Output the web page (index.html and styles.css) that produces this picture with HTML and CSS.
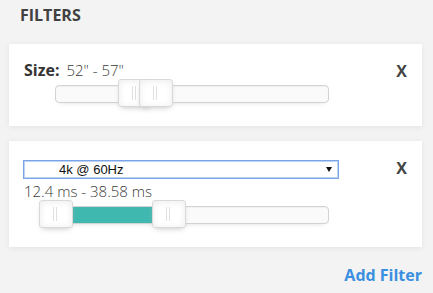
FILE: index.html
```html
<!DOCTYPE html>
<html lang="en">
<head>
  <meta charset="UTF-8">
  <title>Filters</title>
  <meta name="viewport" content="width=device-width, initial-scale=1.0">
  <link rel="stylesheet" href="styles.css">
</head>
<body>
  <div class="filters">
    <h2 class="title">FILTERS</h2>

    <div class="card">
      <div class="card-body">
        <div class="label-row">
          <strong class="label">Size:</strong> <span class="value">52" - 57"</span>
        </div>
        <div class="slider">
          <div class="handle" style="left: 29%;"></div>
          <div class="handle" style="left: 36.8%;"></div>
        </div>
      </div>
      <button class="remove">X</button>
    </div>

    <div class="card">
      <div class="card-body">
        <div class="select-wrap">
          <select class="select">
            <option>4k @ 60Hz</option>
            <option>1080p @ 60Hz</option>
            <option>1080p @ 120Hz</option>
          </select>
        </div>
        <div class="label-row value">12.4 ms - 38.58 ms</div>
        <div class="slider">
          <div class="connect" style="left: 0; width: 41.5%;"></div>
          <div class="handle" style="left: 0%;"></div>
          <div class="handle" style="left: 41.5%;"></div>
        </div>
      </div>
      <button class="remove">X</button>
    </div>

    <div class="actions">
      <a href="#" class="add-filter">Add Filter</a>
    </div>
  </div>
</body>
</html>
```

FILE: styles.css
```css
body {
  margin: 0;
  background: #f3f3f3;
  font-family: 'Open Sans', 'Segoe UI', sans-serif;
  color: #444;
}

.filters {
  width: 413px;
  padding-left: 9px;
}

.title {
  margin: 0 0 18px;
  padding: 4px 11px 0;
  font-size: 16px;
  line-height: 22px;
  font-weight: bold;
  color: #414141;
}

.card {
  display: flex;
  align-items: flex-start;
  background: #fff;
  padding: 16px 15px 23px;
  margin-bottom: 15px;
  box-shadow: 0 1px 6px rgba(0,0,0,0.07);
}

.card-body {
  flex: 1;
}

.label-row {
  font-size: 15px;
  line-height: 20px;
  color: #333;
}

.label {
  font-size: 16px;
  font-weight: bold;
  margin-right: 3px;
}

.value {
  font-weight: 300;
  color: #3a3a3a;
}

.slider {
  position: relative;
  height: 16px;
  margin: 5px 0 0 31px;
  width: 272px;
  border: 1px solid #d3d3d3;
  border-radius: 4px;
  background: #fafafa;
  box-shadow: inset 0 1px 1px #f0f0f0, 0 3px 6px -5px #bbb;
}

.connect {
  position: absolute;
  top: 0;
  bottom: 0;
  background: #3fb8af;
}

.handle {
  position: absolute;
  top: -7px;
  width: 32px;
  height: 26px;
  margin-left: -17px;
  border: 1px solid #d9d9d9;
  border-radius: 3px;
  background: #fff;
  box-shadow: inset 0 0 1px #fff, inset 0 1px 7px #ebebeb, 0 3px 6px -3px #bbb;
}

.handle::before,
.handle::after {
  content: "";
  position: absolute;
  top: 6px;
  left: 13px;
  width: 1px;
  height: 14px;
  background: #e0e0e0;
}

.handle::after {
  left: 16px;
}

.select-wrap {
  position: relative;
  width: 316px;
  margin: 3px 0 2px -1px;
}

.select {
  display: block;
  width: 100%;
  height: 19px;
  padding: 0 0 0 35px;
  border: 1px solid #7aa3e8;
  border-radius: 0;
  outline: 1px solid #bcd2f5;
  outline-offset: -2px;
  background: #fff;
  font-family: 'Liberation Sans', Arial, sans-serif;
  font-size: 13px;
  color: #111;
  appearance: none;
  -webkit-appearance: none;
}

.select-wrap::after {
  content: "";
  position: absolute;
  right: 7px;
  top: 7px;
  border-left: 3px solid transparent;
  border-right: 3px solid transparent;
  border-top: 5px solid #111;
  pointer-events: none;
}

.remove {
  margin: 1px 0 0;
  padding: 0;
  border: none;
  background: none;
  font-family: 'Open Sans', 'Segoe UI', sans-serif;
  font-size: 16px;
  line-height: 20px;
  font-weight: bold;
  color: #444;
  cursor: pointer;
}

.actions {
  display: flex;
  justify-content: flex-end;
  padding-top: 2px;
}

.add-filter {
  font-size: 16px;
  line-height: 22px;
  font-weight: bold;
  color: #3b8fe0;
  text-decoration: none;
}

.add-filter:hover {
  text-decoration: underline;
}
```
